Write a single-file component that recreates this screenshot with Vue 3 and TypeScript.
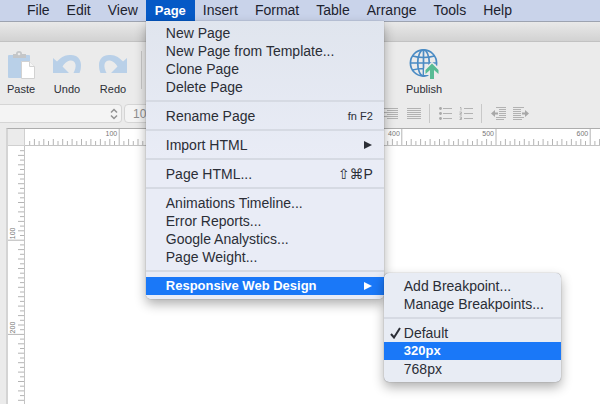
<script setup lang="ts">
import { computed, onBeforeUnmount, onMounted, ref } from 'vue'

interface MenuEntry {
  label: string
  shortcut?: string
  compact?: boolean
  children?: MenuEntry[][]
  checked?: boolean
  active?: boolean
}

interface Mark {
  value: number
  pos: number
  length: number
}

const menus = ['File', 'Edit', 'View', 'Page', 'Insert', 'Format', 'Table', 'Arrange', 'Tools', 'Help']
const openMenu = ref('Page')
const fontSize = ref('10')

const breakpoints: MenuEntry[][] = [
  [{ label: 'Add Breakpoint...' }, { label: 'Manage Breakpoints...' }],
  [{ label: 'Default', checked: true }, { label: '320px', active: true }, { label: '768px' }],
]

const pageMenu: MenuEntry[][] = [
  [
    { label: 'New Page' },
    { label: 'New Page from Template...' },
    { label: 'Clone Page' },
    { label: 'Delete Page' },
  ],
  [{ label: 'Rename Page', shortcut: 'fn F2', compact: true }],
  [{ label: 'Import HTML', children: [] }],
  [{ label: 'Page HTML...', shortcut: '⇧⌘P' }],
  [
    { label: 'Animations Timeline...' },
    { label: 'Error Reports...' },
    { label: 'Google Analystics...' },
    { label: 'Page Weight...' },
  ],
  [{ label: 'Responsive Web Design', children: breakpoints, active: true }],
]

// Ruler marks: one every 5 units, numbered every 100, as many as the window has room for.
const unit = 0.942
const viewWidth = ref(window.innerWidth)
const viewHeight = ref(window.innerHeight)

function makeMarks(space: number): Mark[] {
  return Array.from({ length: Math.floor(space / (unit * 5)) }, (_, i) => {
    const value = (i + 1) * 5
    return {
      value,
      pos: Math.round(value * unit * 10) / 10,
      length: value % 100 === 0 ? 16 : value % 10 === 0 ? 6 : 4,
    }
  })
}

const across = computed(() => makeMarks(viewWidth.value - 25))
const down = computed(() => makeMarks(viewHeight.value - 146))
const numbered = (marks: Mark[]) => marks.filter((m) => m.value % 100 === 0)

function measure() {
  viewWidth.value = window.innerWidth
  viewHeight.value = window.innerHeight
}
onMounted(() => window.addEventListener('resize', measure))
onBeforeUnmount(() => window.removeEventListener('resize', measure))
</script>

<template>
  <div class="screen">
    <nav class="menubar" aria-label="Main menu">
      <div v-for="name in menus" :key="name" class="menu">
        <button type="button" class="menu-title" :class="{ open: name === openMenu }" @click="openMenu = name">
          {{ name }}
        </button>
        <div v-if="name === 'Page' && openMenu === 'Page'" class="popup main-popup" role="menu">
          <div v-for="(group, g) in pageMenu" :key="g" class="group" role="group">
            <div v-for="item in group" :key="item.label" class="row">
              <button type="button" role="menuitem" class="item" :class="{ active: item.active }">
                <span>{{ item.label }}</span>
                <span v-if="item.shortcut" class="shortcut" :class="{ compact: item.compact }">{{ item.shortcut }}</span>
                <svg v-if="item.children" class="arrow" viewBox="0 0 8 8" aria-hidden="true"><path d="M0 0L8 4L0 8Z" /></svg>
              </button>
              <div v-if="item.children && item.children.length" class="popup sub-popup" role="menu">
                <div v-for="(sub, s) in item.children" :key="s" class="group" role="group">
                  <button
                    v-for="entry in sub"
                    :key="entry.label"
                    type="button"
                    role="menuitem"
                    class="item"
                    :class="{ active: entry.active }"
                  >
                    <svg v-if="entry.checked" class="check" viewBox="0 0 11 12" aria-hidden="true">
                      <path d="M1 7L4 10.5L10 1" />
                    </svg>
                    <span>{{ entry.label }}</span>
                  </button>
                </div>
              </div>
            </div>
          </div>
        </div>
      </div>
    </nav>

    <div class="titlebar"></div>

    <div class="toolbar">
      <button type="button" class="tool">
        <svg viewBox="0 0 28 30" width="28" height="30" aria-hidden="true">
          <rect x="1" y="4" width="22" height="23" rx="1" fill="#b9d0e8" />
          <path d="M6 7V3H9Q9 0 12 0T15 3H19V7Z" fill="#c4c6c8" />
          <circle cx="12" cy="3" r="1.3" fill="#ebebeb" />
          <path d="M14.5 10.500H22.500L27.500 15.500V27.500H14.500Z" fill="#fff" stroke="#d2d2d2" />
          <path d="M22.500 10.500V15.500H27.500" fill="#f5f5f5" stroke="#d2d2d2" />
        </svg>
        <span>Paste</span>
      </button>
      <button type="button" class="tool">
        <svg viewBox="0 0 28 30" width="28" height="30" aria-hidden="true">
          <path d="M0 7L4 10.500C9 5 13 4 18 4C24 4 28 8 28 14C28 17 27.500 20 26.500 22H20.500C22 19 23 16 22.500 13.500C22 10.500 19.500 9 17 9.500C14 10 11.500 12 9.500 15.500L16 22H0Z" fill="#b9d0e8" />
        </svg>
        <span>Undo</span>
      </button>
      <button type="button" class="tool">
        <svg viewBox="0 0 28 30" width="28" height="30" aria-hidden="true">
          <path d="M28 7L24 10.500C19 5 15 4 10 4C4 4 0 8 0 14C0 17 .5 20 1.500 22H7.500C6 19 5 16 5.500 13.500C6 10.500 8.500 9 11 9.500C14 10 16.500 12 18.500 15.500L12 22H28Z" fill="#b9d0e8" />
        </svg>
        <span>Redo</span>
      </button>
      <i class="divider"></i>
      <button type="button" class="tool publish">
        <svg viewBox="0 0 30 30" width="30" height="30" aria-hidden="true">
          <g fill="none" stroke="#4a8bc4" stroke-width="1.700">
            <circle cx="14.500" cy="14" r="13.100" />
            <ellipse cx="14.500" cy="14" rx="5.800" ry="13.100" />
            <path d="M14.500 1V27M1.500 14H27.500M3.500 7Q14.500 10 25.500 7M3.500 21Q14.500 18 25.500 21" />
          </g>
          <path d="M23 14L30 20V25H25.500V29H20.500V25H16V20Z" fill="#ebebeb" stroke="#ebebeb" stroke-width="2" />
          <path d="M23 14.500L29.500 21V25L25 21V30H21V21L16.500 25V21Z" fill="#57bb94" />
        </svg>
        <span>Publish</span>
      </button>
    </div>

    <div class="formatbar">
      <div class="font-field">
        <select aria-label="Font family"><option value=""></option></select>
        <svg viewBox="0 0 8 12" width="8" height="12" aria-hidden="true"><path d="M1 4.500L4 1.500L7 4.500M1 7.500L4 10.500L7 7.500" /></svg>
      </div>
      <input v-model="fontSize" class="size-field" aria-label="Font size" />
      <div class="format-icons">
        <button type="button" aria-label="Align right">
          <svg viewBox="0 0 14 14" width="14" height="14"><path d="M0 1.500H14M3 3.500H14M0 5.500H14M3 7.500H14M0 9.500H14M3 11.500H14" /></svg>
        </button>
        <button type="button" aria-label="Justify" class="justify">
          <svg viewBox="0 0 14 14" width="14" height="14"><path d="M0 1.500H14M0 3.500H14M0 5.500H14M0 7.500H14M0 9.500H14M0 11.500H14" /></svg>
        </button>
        <i class="divider"></i>
        <button type="button" aria-label="Bulleted list">
          <svg viewBox="0 0 14 14" width="14" height="14">
            <path d="M4 1.500H13M4 6.500H13M4 11.500H13" />
            <g class="solid"><circle cx="1.500" cy="1.500" r="1.400" /><circle cx="1.500" cy="6.500" r="1.400" /><circle cx="1.500" cy="11.500" r="1.400" /></g>
          </svg>
        </button>
        <button type="button" aria-label="Numbered list" class="numbers">
          <svg viewBox="0 0 14 14" width="14" height="14">
            <path d="M5 1.500H14M5 6.500H14M5 11.500H14" />
            <path d="M1 .5H2V3.500M.5 5H2.500V6.500H1V8H3M.5 10H2.500V12.500H.5M1 11.300H2.500" />
          </svg>
        </button>
        <i class="divider"></i>
        <button type="button" aria-label="Outdent">
          <svg viewBox="0 0 16 14" width="16" height="14">
            <path d="M5 .5H15M8 2.500H15M8 4.500H15M8 6.500H15M8 8.500H15M5 10.500H15M5 12.500H13" />
            <path d="M0 6.500L4 3V5.500H7V7.500H4V10Z" class="solid" />
          </svg>
        </button>
        <button type="button" aria-label="Indent" class="indent">
          <svg viewBox="0 0 16 14" width="16" height="14">
            <path d="M0 .5H11M0 2.500H8M0 4.500H8M0 6.500H8M0 8.500H8M0 10.500H11M0 12.500H9" />
            <path d="M16 6.500L12 3V5.500H9V7.500H12V10Z" class="solid" />
          </svg>
        </button>
      </div>
    </div>

    <main class="workspace">
      <div class="corner"></div>
      <div class="ruler horizontal">
        <svg aria-hidden="true">
          <line v-for="m in across" :key="m.value" :x1="m.pos" :x2="m.pos" :y1="16 - m.length" y2="16" />
          <text v-for="m in numbered(across)" :key="m.value" :x="m.pos - 2" y="7" text-anchor="end">{{ m.value }}</text>
        </svg>
      </div>
      <div class="ruler vertical">
        <svg aria-hidden="true">
          <line v-for="m in down" :key="m.value" :y1="m.pos" :y2="m.pos" :x1="16 - m.length" x2="16" />
          <text v-for="m in numbered(down)" :key="m.value" :transform="`translate(7 ${m.pos - 1}) rotate(-90)`">{{ m.value }}</text>
        </svg>
      </div>
      <div class="page"></div>
    </main>
  </div>
</template>

<style>
body {
  margin: 0;
}
</style>

<style scoped>
.screen {
  display: flex;
  flex-direction: column;
  min-height: 100vh;
  overflow: hidden;
  background: #ebebeb;
  font-family: "Liberation Sans", Arial, "DejaVu Sans", sans-serif;
  color: #2b2e36;
}

button,
input,
select {
  margin: 0;
  padding: 0;
  border: 0;
  background: none;
  font: inherit;
  color: inherit;
}

.menubar {
  display: flex;
  height: 21px;
  padding-left: 19px;
  background: #c9d3ea;
}

.menu {
  position: relative;
  margin-left: -1px;
}

.menu-title {
  display: block;
  height: 21px;
  padding: 0 9px;
  font-size: 14px;
  line-height: 21px;
  color: #1d222e;
}

.menu-title.open {
  background: #0559c6;
  color: #fff;
  font-size: 13px;
  font-weight: bold;
}

.popup {
  position: absolute;
  z-index: 10;
  box-sizing: border-box;
  padding: 4px 0;
  background: linear-gradient(#e0e5ee, #e9ecf6 50%);
  box-shadow: 0 0 1px rgba(0, 0, 0, 0.5), 0 5px 12px rgba(0, 0, 0, 0.32);
}

.main-popup {
  top: 21px;
  left: 0;
  width: 238px;
  padding-top: 3px;
  border-radius: 0 0 5px 5px;
}

.sub-popup {
  top: -4px;
  left: 100%;
  width: 177px;
  border-radius: 5px;
  background: #e8ecf4;
}

.group + .group::before {
  content: "";
  display: block;
  height: 2px;
  margin: 4px 0 5px;
  background: #d6dae3;
}

.row {
  position: relative;
}

.item {
  position: relative;
  display: flex;
  align-items: center;
  justify-content: space-between;
  width: 100%;
  height: 18px;
  padding: 0 11px 0 20px;
  font-size: 14px;
  line-height: 18px;
  white-space: nowrap;
}

.item.active {
  background: #1a78f8;
  color: #fff;
  font-size: 13px;
  font-weight: bold;
}

.shortcut.compact {
  font-size: 11px;
}

.arrow {
  width: 8px;
  height: 8px;
  margin-right: 1px;
  fill: currentColor;
}

.check {
  position: absolute;
  left: 6px;
  top: 3px;
  width: 11px;
  height: 12px;
  fill: none;
  stroke: currentColor;
  stroke-width: 2;
}

.titlebar {
  height: 19px;
  border-top: 1px solid #9da3b0;
  border-bottom: 1px solid #c2c2c2;
  background: linear-gradient(#e9e9e9, #d2d2d2);
}

.toolbar {
  display: flex;
  align-items: flex-start;
  padding: 9px 0 0 7px;
  height: 53px;
}

.tool {
  display: flex;
  flex-direction: column;
  align-items: center;
  width: 28px;
  margin-right: 18px;
  font-size: 11px;
  line-height: 13px;
}

.tool span {
  padding-top: 2px;
}

.divider {
  width: 1px;
  background: #c8c8c8;
}

.toolbar .divider {
  height: 38px;
  margin-right: 264px;
  margin-left: -4px;
}

.tool.publish {
  width: 36px;
  margin: -2px 0 0;
}

.publish span {
  padding-top: 4px;
}

.formatbar {
  display: flex;
  align-items: center;
  height: 19px;
  padding-bottom: 5px;
}

.font-field {
  position: relative;
  display: flex;
  width: 122px;
}

.font-field select,
.size-field {
  box-sizing: border-box;
  width: 100%;
  height: 19px;
  border: 1px solid #d5d5d5;
  border-radius: 4px;
  background: #f4f4f4;
  appearance: none;
}

.font-field select {
  border-left: 0;
  border-radius: 0 4px 4px 0;
}

.font-field svg {
  position: absolute;
  top: 4px;
  right: 4px;
  fill: none;
  stroke: #929292;
  stroke-width: 1.5;
  pointer-events: none;
}

.size-field {
  width: 48px;
  margin-left: 2px;
  padding-left: 8px;
  font-size: 12px;
  color: #8e8e8e;
}

.format-icons {
  display: flex;
  align-items: center;
  margin-left: 212px;
}

.format-icons svg {
  display: block;
  fill: none;
  stroke: #b2b2b2;
  stroke-width: 1;
}

.format-icons .solid {
  fill: #a8a8a8;
  stroke: none;
}

.format-icons .divider {
  height: 19px;
  margin: 0 9px 0 8px;
}

.justify {
  margin-left: 9px;
}

.numbers,
.indent {
  margin-left: 6px;
}

.workspace {
  display: grid;
  grid-template-columns: 17px 1fr;
  grid-template-rows: 17px 1fr;
  flex: 1;
  margin-left: 6px;
  border-top: 1px solid #adadad;
  border-left: 2px solid #d4d4d4;
  background: #fff;
}

.corner {
  background: #ebebeb;
  border-right: 1px solid #d0d0d0;
  border-bottom: 1px solid #d0d0d0;
}

.ruler {
  position: relative;
  overflow: hidden;
}

.ruler svg {
  position: absolute;
  width: 100%;
  height: 100%;
}

.ruler line {
  stroke: #b4b4b4;
  stroke-width: 1;
}

.ruler text {
  font-size: 7px;
  fill: #777;
}

.horizontal {
  border-bottom: 1px solid #c4c4c4;
}

.vertical {
  border-right: 1px solid #c4c4c4;
}
</style>
